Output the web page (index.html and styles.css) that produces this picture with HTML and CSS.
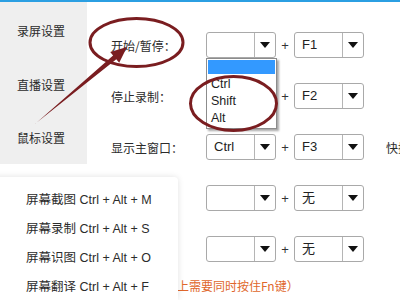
FILE: index.html
```html
<!DOCTYPE html>
<html>
<head>
<meta charset="utf-8">
<link rel="stylesheet" href="styles.css">
</head>
<body>
<div class="topbar"></div>
<div class="layout">
  <aside class="sidebar">
    <div class="nav-item">录屏设置</div>
    <div class="nav-item">直播设置</div>
    <div class="nav-item">鼠标设置</div>
  </aside>
  <main class="main">
    <div class="row">
      <span class="label">开始/暂停：</span>
      <div class="select"><span class="val"></span><span class="btn"><i class="caret"></i></span></div>
      <span class="plus">+</span>
      <div class="select"><span class="val">F1</span><span class="btn"><i class="caret"></i></span></div>
    </div>
    <div class="row">
      <span class="label">停止录制：</span>
      <div class="select"><span class="val"></span><span class="btn"><i class="caret"></i></span></div>
      <span class="plus">+</span>
      <div class="select"><span class="val">F2</span><span class="btn"><i class="caret"></i></span></div>
    </div>
    <div class="row">
      <span class="label">显示主窗口：</span>
      <div class="select"><span class="val">Ctrl</span><span class="btn"><i class="caret"></i></span></div>
      <span class="plus">+</span>
      <div class="select"><span class="val">F3</span><span class="btn"><i class="caret"></i></span></div>
      <span class="extra">快捷键</span>
    </div>
    <div class="row">
      <span class="label"></span>
      <div class="select"><span class="val"></span><span class="btn"><i class="caret"></i></span></div>
      <span class="plus">+</span>
      <div class="select"><span class="val">无</span><span class="btn"><i class="caret"></i></span></div>
    </div>
    <div class="row">
      <span class="label"></span>
      <div class="select"><span class="val"></span><span class="btn"><i class="caret"></i></span></div>
      <span class="plus">+</span>
      <div class="select"><span class="val">无</span><span class="btn"><i class="caret"></i></span></div>
    </div>
    <p class="note">上需要同时按住Fn键）</p>
  </main>
</div>

<ul class="dropdown">
  <li class="opt selected"></li>
  <li class="opt">Ctrl</li>
  <li class="opt">Shift</li>
  <li class="opt">Alt</li>
</ul>

<div class="card">
  <div class="card-item">屏幕截图 Ctrl + Alt + M</div>
  <div class="card-item">屏幕录制 Ctrl + Alt + S</div>
  <div class="card-item">屏幕识图 Ctrl + Alt + O</div>
  <div class="card-item last">屏幕翻译 Ctrl + Alt + F</div>
</div>

<svg class="annot" width="400" height="300" viewBox="0 0 400 300">
  <ellipse cx="136.5" cy="42.5" rx="46.5" ry="24" fill="none" stroke="#7a1d20" stroke-width="3"/>
  <ellipse cx="233.5" cy="103.5" rx="43" ry="27" fill="none" stroke="#7a1d20" stroke-width="3"/>
  <polygon points="34.5,124.6 113.1,55.4 110.2,51.9 127,47 119.2,62.7 116.3,59.2 35.5,123.4" fill="#7a1d20"/>
</svg>
</body>
</html>
```
FILE: styles.css
```css
* { box-sizing: border-box; }
html, body {
  margin: 0;
  padding: 0;
}
body {
  width: 400px;
  height: 300px;
  overflow: hidden;
  position: relative;
  background: #fff;
  font-family: "Liberation Sans", "Noto Sans CJK SC", sans-serif;
  color: #2b2b2b;
}
.topbar {
  height: 2px;
  background: #2b9fe2;
}
.layout {
  display: flex;
  align-items: flex-start;
  height: 298px;
  overflow: hidden;
}
.sidebar {
  width: 87px;
  height: 162px;
  flex: none;
  background: #efefef;
  padding-top: 2px;
}
.nav-item {
  height: 53.5px;
  line-height: 53.5px;
  padding-left: 17px;
  font-size: 12px;
  font-family: "Noto Sans CJK SC", sans-serif;
  color: #2b2b2b;
}
.main {
  flex: 1;
  padding: 30px 0 0 24px;
  display: flex;
  flex-direction: column;
  gap: 25px;
  overflow: hidden;
  white-space: nowrap;
}
.row {
  display: flex;
  align-items: center;
  height: 26px;
}
.label {
  width: 95px;
  flex: none;
  font-size: 12px;
  font-family: "Noto Sans CJK SC", sans-serif;
}
.select {
  width: 70px;
  height: 26px;
  flex: none;
  display: flex;
  border: 1px solid #a9a9a9;
  border-radius: 3px;
  background: #fff;
}
.val {
  flex: 1;
  padding-left: 7px;
  font-size: 13px;
  line-height: 24px;
  font-family: "Liberation Sans", "Noto Sans CJK SC", sans-serif;
  color: #222;
}
.btn {
  width: 21px;
  border-left: 1px solid #b5b5b5;
  display: flex;
  align-items: center;
  justify-content: center;
}
.caret {
  width: 0;
  height: 0;
  border-left: 5px solid transparent;
  border-right: 5px solid transparent;
  border-top: 6px solid #111;
}
.plus {
  width: 18px;
  flex: none;
  text-align: center;
  font-size: 13px;
  color: #333;
}
.extra {
  margin-left: 22px;
  font-size: 12px;
  font-family: "Noto Sans CJK SC", sans-serif;
}
.note {
  margin: -10px 0 0 66px;
  font-size: 12px;
  line-height: 17px;
  color: #e0672c;
  font-family: "Noto Sans CJK SC", sans-serif;
}
.dropdown {
  position: absolute;
  left: 206px;
  top: 58px;
  width: 71px;
  height: 71px;
  margin: 0;
  padding: 1px;
  list-style: none;
  background: #fff;
  border: 1px solid #8c8c8c;
  box-shadow: 2px 2px 2px rgba(0,0,0,0.35);
}
.opt {
  height: 17px;
  line-height: 17px;
  padding-left: 3px;
  font-size: 12.5px;
  color: #1e1e1e;
}
.opt.selected {
  height: 14px;
  background: #3399ff;
  margin-bottom: 2px;
}
.card {
  position: absolute;
  left: -10px;
  top: 177px;
  width: 188px;
  height: 123px;
  background: #fff;
  border-radius: 4px 4px 0 0;
  box-shadow: 0 0 6px rgba(0,0,0,0.12);
  padding: 8.5px 0 0 36px;
}
.card-item {
  height: 29px;
  line-height: 29px;
  font-size: 12.5px;
  color: #2b2b2b;
  white-space: nowrap;
  font-family: "Liberation Sans", "Noto Sans CJK SC", sans-serif;
}
.card-item.last {
  height: 25px;
  line-height: 25px;
  margin-top: 2px;
}
.annot {
  position: absolute;
  left: 0;
  top: 0;
  pointer-events: none;
}
```
